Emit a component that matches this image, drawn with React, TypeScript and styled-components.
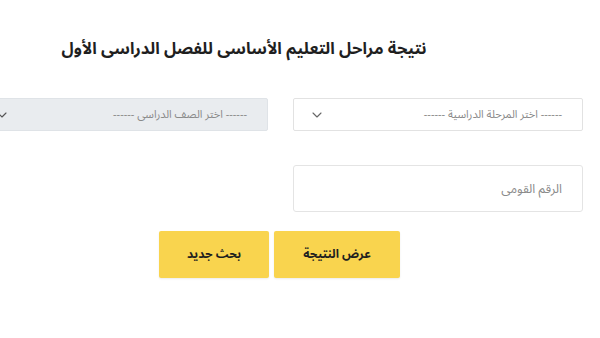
import React from "react";
import styled, { createGlobalStyle } from "styled-components";

const Global = createGlobalStyle`
  html, body { margin: 0; padding: 0; background: #fff; overflow: hidden; }
  body { font-family: "Noto Sans Arabic", "Noto Kufi Arabic", "DejaVu Sans", sans-serif; direction: rtl; }
  * { box-sizing: border-box; }
`;

const Page = styled.div`
  width: 600px;
  height: 338px;
  overflow: hidden;
  display: flex;
  flex-direction: column;
  padding-top: 33px;
`;

const Title = styled.h1`
  margin: 0;
  padding-right: 112px;
  text-align: center;
  font-size: 16.5px;
  line-height: 32px;
  font-weight: 700;
  color: #1f1f1f;
  white-space: nowrap;
`;

const Form = styled.div`
  display: grid;
  grid-template-columns: 290px 290px;
  column-gap: 25px;
  row-gap: 34px;
  padding-right: 17px;
  margin-top: 33px;
`;

const SelectBox = styled.div<{ $disabled?: boolean }>`
  height: 33px;
  display: flex;
  align-items: center;
  justify-content: space-between;
  padding: 0 20px 0 18px;
  border: 1px solid ${(p) => (p.$disabled ? "#dfe3e7" : "#e2e2e2")};
  background: ${(p) => (p.$disabled ? "#e9ecef" : "#fff")};
  border-radius: 2px;
  font-size: 11px;
  color: #8a8a8a;
  white-space: nowrap;
`;

const Chevron = styled.svg`
  width: 10px;
  height: 6px;
  flex: none;
`;

const NationalId = styled.div`
  height: 47px;
  display: flex;
  align-items: center;
  padding-right: 20px;
  border: 1px solid #e4e4e4;
  border-radius: 3px;
  font-size: 12.5px;
  color: #8a8a8a;
`;

const Buttons = styled.div`
  display: flex;
  gap: 5px;
  padding-right: 200px;
  margin-top: 19px;
`;

const Button = styled.button<{ $w: number }>`
  width: ${(p) => p.$w}px;
  height: 47px;
  border: none;
  border-radius: 2px;
  background: #f9d44e;
  box-shadow: 0 1px 2px rgba(0, 0, 0, 0.08);
  font-family: inherit;
  font-size: 12px;
  font-weight: 700;
  color: #1f1f1f;
  direction: rtl;
`;

const Arrow = ({ color }: { color: string }) => (
  <Chevron viewBox="0 0 10 6">
    <path d="M1 1 L5 5 L9 1" fill="none" stroke={color} strokeWidth="1.1" strokeLinecap="round" strokeLinejoin="round" />
  </Chevron>
);

export default function App() {
  return (
    <>
      <Global />
      <Page>
        <Title>نتيجة مراحل التعليم الأساسى للفصل الدراسى الأول</Title>
        <Form>
          <SelectBox>
            <span>------ اختر المرحلة الدراسية ------</span>
            <Arrow color="#666" />
          </SelectBox>
          <SelectBox $disabled>
            <span>------ اختر الصف الدراسى ------</span>
            <Arrow color="#555" />
          </SelectBox>
          <NationalId>الرقم القومى</NationalId>
        </Form>
        <Buttons>
          <Button $w={126}>عرض النتيجة</Button>
          <Button $w={110}>بحث جديد</Button>
        </Buttons>
      </Page>
    </>
  );
}
